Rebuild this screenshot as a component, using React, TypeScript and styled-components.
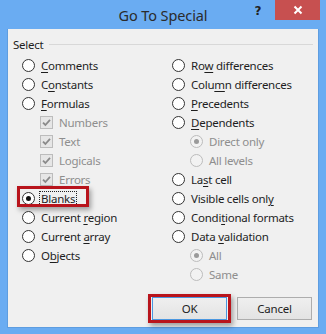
import React from "react";
import styled, { createGlobalStyle, css } from "styled-components";

const Global = createGlobalStyle`
  html, body { margin: 0; padding: 0; background: #6aacf2; }
  body { font-family: "Noto Sans", "Open Sans", sans-serif; }
  * { box-sizing: border-box; }
`;

const Window = styled.div`
  width: 326px;
  height: 334px;
  background: #6aacf2;
  display: flex;
  flex-direction: column;
  padding: 0 7px 6px 7px;
`;

const TitleBar = styled.div`
  height: 29px;
  display: flex;
  align-items: flex-start;
  position: relative;
  margin: 0 -7px;
`;

const Title = styled.div`
  position: absolute;
  left: 0;
  right: 0;
  top: 5px;
  text-align: center;
  font-size: 14.5px;
  color: #2b2b2b;
  letter-spacing: -0.1px;
`;

const TitleButtons = styled.div`
  margin-left: auto;
  display: flex;
  align-items: flex-start;
  margin-right: 6px;
`;

const HelpButton = styled.div`
  width: 32px;
  height: 20px;
  display: flex;
  align-items: center;
  justify-content: center;
  font-family: "DejaVu Sans", sans-serif;
  font-weight: bold;
  font-size: 12px;
  color: #222;
  padding-top: 1px;
  padding-right: 2px;
`;

const CloseButton = styled.div`
  width: 45px;
  height: 20px;
  background: #c75050;
  display: flex;
  align-items: center;
  justify-content: center;
`;

const Client = styled.div`
  flex: 1;
  background: #f0f0f0;
  border: 1px solid #5e9de0;
  border-top: none;
  display: flex;
  flex-direction: column;
  font-size: 11.5px;
  letter-spacing: -0.25px;
`;

const Legend = styled.div`
  display: flex;
  align-items: center;
  height: 16px;
  margin-top: 7px;
  padding: 0 5px 0 5px;
  color: #1e1e1e;
  gap: 6px;
  &::after {
    content: "";
    flex: 1;
    height: 1px;
    background: #d8d8d8;
  }
`;

const Columns = styled.div`
  display: grid;
  grid-template-columns: 150px 1fr;
  padding: 4px 0 0 14px;
`;

const Column = styled.div`
  display: flex;
  flex-direction: column;
`;

const Row = styled.div<{ $indent?: boolean }>`
  position: relative;
  height: 19px;
  display: flex;
  align-items: center;
  gap: 5px;
  padding-left: ${(p) => (p.$indent ? "18px" : "0")};
  color: #1e1e1e;
`;

const Label = styled.span<{ $disabled?: boolean; $focus?: boolean }>`
  color: ${(p) => (p.$disabled ? "#8e8e8e" : "#1e1e1e")};
  line-height: 13px;
  padding: 0 1px;
  white-space: nowrap;
  ${(p) =>
    p.$focus &&
    css`
      outline: 1px dotted #222;
      outline-offset: 0px;
    `}
  u { text-decoration-thickness: 1px; text-underline-offset: 2px; }
`;

const RadioCircle = styled.span<{ $disabled?: boolean; $checked?: boolean }>`
  width: 13px;
  height: 13px;
  border-radius: 50%;
  flex: none;
  border: 1px solid ${(p) => (p.$disabled ? "#bcbcbc" : "#333")};
  background: ${(p) => (p.$disabled ? "#f2f2f2" : "#fff")};
  display: flex;
  align-items: center;
  justify-content: center;
  &::after {
    content: "";
    width: 5px;
    height: 5px;
    border-radius: 50%;
    display: ${(p) => (p.$checked ? "block" : "none")};
    background: ${(p) => (p.$disabled ? "#9a9a9a" : "#111")};
  }
`;

const CheckBox = styled.span`
  width: 13px;
  height: 13px;
  flex: none;
  border: 1px solid #bcbcbc;
  background: #e6e6e6;
  display: flex;
  align-items: center;
  justify-content: center;
`;

const Highlight = styled.span<{ $l: number; $t: number; $w: number; $h: number }>`
  position: absolute;
  left: ${(p) => p.$l}px;
  top: ${(p) => p.$t}px;
  width: ${(p) => p.$w}px;
  height: ${(p) => p.$h}px;
  border: 3px solid #b8141c;
  box-shadow: 2px 3px 5px rgba(0, 0, 0, 0.35);
  pointer-events: none;
`;

const Footer = styled.div`
  margin-top: auto;
  display: flex;
  justify-content: flex-end;
  gap: 10px;
  padding: 0 6px 7px 0;
`;

const ButtonWrap = styled.div`
  position: relative;
`;

const Button = styled.div<{ $default?: boolean }>`
  width: 75px;
  height: 23px;
  display: flex;
  align-items: center;
  justify-content: center;
  color: #1e1e1e;
  background: linear-gradient(#efefef, #e3e3e3);
  border: 1px solid ${(p) => (p.$default ? "#4a97e0" : "#adadad")};
`;

const Check = () => (
  <svg width="9" height="9" viewBox="0 0 9 9">
    <path d="M1 4.6 L3.4 7 L8 1.8" fill="none" stroke="#8a8a8a" strokeWidth="1.8" />
  </svg>
);

type Item = {
  label: React.ReactNode;
  kind: "radio" | "check";
  indent?: boolean;
  disabled?: boolean;
  checked?: boolean;
  focus?: boolean;
  highlight?: boolean;
};

const u = (a: string, k: string, b: string) => (
  <>
    {a}
    <u>{k}</u>
    {b}
  </>
);

const left: Item[] = [
  { label: u("", "C", "omments"), kind: "radio" },
  { label: u("C", "o", "nstants"), kind: "radio" },
  { label: u("", "F", "ormulas"), kind: "radio" },
  { label: "Numbers", kind: "check", indent: true, disabled: true },
  { label: "Text", kind: "check", indent: true, disabled: true },
  { label: "Logicals", kind: "check", indent: true, disabled: true },
  { label: "Errors", kind: "check", indent: true, disabled: true },
  { label: u("Blan", "k", "s"), kind: "radio", checked: true, focus: true, highlight: true },
  { label: u("Current ", "r", "egion"), kind: "radio" },
  { label: u("Current ", "a", "rray"), kind: "radio" },
  { label: u("O", "b", "jects"), kind: "radio" },
];

const right: Item[] = [
  { label: u("Ro", "w", " differences"), kind: "radio" },
  { label: u("Colu", "m", "n differences"), kind: "radio" },
  { label: u("", "P", "recedents"), kind: "radio" },
  { label: u("", "D", "ependents"), kind: "radio" },
  { label: "Direct only", kind: "radio", indent: true, disabled: true, checked: true },
  { label: "All levels", kind: "radio", indent: true, disabled: true },
  { label: u("La", "s", "t cell"), kind: "radio" },
  { label: u("Visible cells onl", "y", ""), kind: "radio" },
  { label: u("Condi", "t", "ional formats"), kind: "radio" },
  { label: u("Data ", "v", "alidation"), kind: "radio" },
  { label: "All", kind: "radio", indent: true, disabled: true, checked: true },
  { label: "Same", kind: "radio", indent: true, disabled: true },
];

const Option = ({ item }: { item: Item }) => (
  <Row $indent={item.indent}>
    {item.kind === "radio" ? (
      <RadioCircle $disabled={item.disabled} $checked={item.checked} />
    ) : (
      <CheckBox>
        <Check />
      </CheckBox>
    )}
    <Label $disabled={item.disabled} $focus={item.focus}>
      {item.label}
    </Label>
    {item.highlight && <Highlight $l={-5} $t={-3} $w={72} $h={21} />}
  </Row>
);

export default function App() {
  return (
    <>
      <Global />
      <Window>
        <TitleBar>
          <Title>Go To Special</Title>
          <TitleButtons>
            <HelpButton>?</HelpButton>
            <CloseButton>
              <svg width="10" height="10" viewBox="0 0 10 10">
                <path d="M1.5 1.5 L8.5 8.5 M8.5 1.5 L1.5 8.5" stroke="#fff" strokeWidth="2" />
              </svg>
            </CloseButton>
          </TitleButtons>
        </TitleBar>
        <Client>
          <Legend>Select</Legend>
          <Columns>
            <Column>
              {left.map((it, i) => (
                <Option key={i} item={it} />
              ))}
            </Column>
            <Column>
              {right.map((it, i) => (
                <Option key={i} item={it} />
              ))}
            </Column>
          </Columns>
          <Footer>
            <ButtonWrap>
              <Button $default>OK</Button>
              <Highlight $l={-4} $t={-3} $w={83} $h={29} />
            </ButtonWrap>
            <Button>Cancel</Button>
          </Footer>
        </Client>
      </Window>
    </>
  );
}
